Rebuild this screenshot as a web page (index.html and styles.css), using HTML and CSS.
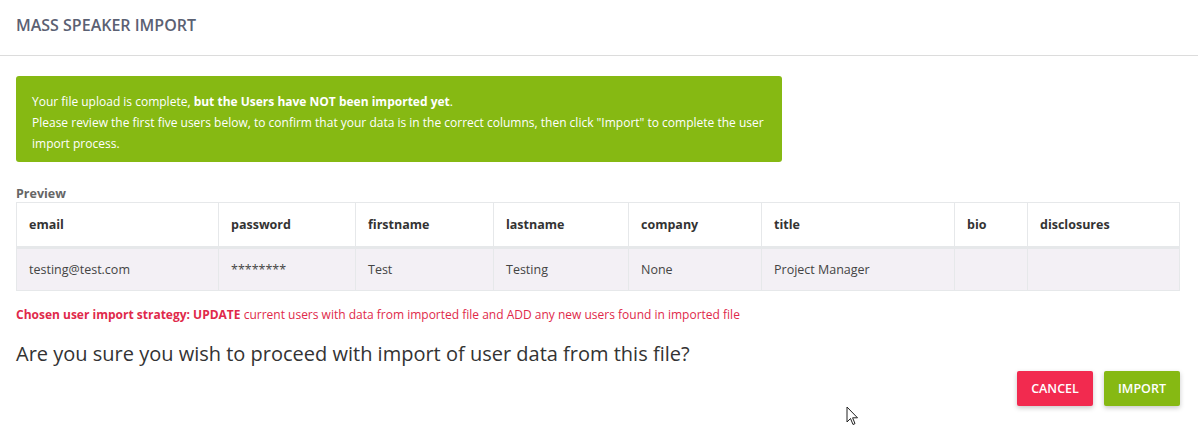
FILE: index.html
```html
<!DOCTYPE html>
<html>
<head>
<meta charset="utf-8">
<link rel="stylesheet" href="styles.css">
</head>
<body>
<div class="modal">
  <div class="modal-header">
    <h1 class="modal-title">MASS SPEAKER IMPORT</h1>
  </div>
  <div class="modal-body">
    <div class="alert">
      Your file upload is complete, <b>but the Users have NOT been imported yet</b>.<br>
      Please review the first five users below, to confirm that your data is in the correct columns, then click "Import" to complete the user import process.
    </div>
    <div class="preview-label">Preview</div>
    <table class="preview">
      <colgroup>
        <col style="width:202px"><col style="width:137px"><col style="width:138px"><col style="width:135px"><col style="width:133px"><col style="width:193px"><col style="width:73px"><col>
      </colgroup>
      <thead>
        <tr><th>email</th><th>password</th><th>firstname</th><th>lastname</th><th>company</th><th>title</th><th>bio</th><th>disclosures</th></tr>
      </thead>
      <tbody>
        <tr><td>testing@test.com</td><td>********</td><td>Test</td><td>Testing</td><td>None</td><td>Project Manager</td><td></td><td></td></tr>
      </tbody>
    </table>
    <p class="strategy"><b>Chosen user import strategy: UPDATE</b> current users with data from imported file and ADD any new users found in imported file</p>
    <p class="question">Are you sure you wish to proceed with import of user data from this file?</p>
    <div class="actions">
      <button class="btn btn-cancel">CANCEL</button>
      <button class="btn btn-import">IMPORT</button>
    </div>
  </div>
  <svg class="cursor" width="14" height="22" viewBox="0 0 14 22"><path d="M1 1 L1 16 L4.5 12.5 L7 18.5 L9 17.6 L6.6 11.8 L11.5 11.8 Z" fill="#fff" stroke="#222" stroke-width="1" stroke-linejoin="miter"/></svg>
</div>
</body>
</html>
```
FILE: styles.css
```css
* { box-sizing: border-box; }
html, body { margin: 0; padding: 0; background: #fff; }
body {
  font-family: "Open Sans", "Liberation Sans", sans-serif;
  color: #333;
  width: 1198px;
  height: 438px;
  overflow: hidden;
}
.modal { position: relative; height: 438px; }
.modal-header {
  height: 56px;
  border-bottom: 1px solid #dcdcdc;
  padding: 14px 16px 0;
}
.modal-title {
  margin: 0;
  font-size: 16px;
  font-weight: 600;
  color: #5b6173;
  line-height: 22px;
  letter-spacing: 0;
}
.modal-body { padding: 20px 18px 0 16px; }
.alert {
  width: 766px;
  height: 86px;
  background: #86b913;
  border-radius: 3px;
  color: #fff;
  font-size: 12px;
  line-height: 21px;
  padding: 15px 16px 0 16px;
}
.alert b { font-weight: 700; }
.preview-label {
  margin-top: 23px;
  font-size: 12.5px;
  font-weight: 700;
  color: #666;
  line-height: 17px;
}
.preview {
  width: 1164px;
  border-collapse: collapse;
  table-layout: fixed;
  font-size: 12.5px;
}
.preview th, .preview td {
  border: 1px solid #e6e8ea;
  text-align: left;
  padding: 0 12px;
}
.preview th {
  height: 45px;
  font-weight: 700;
  color: #333;
  background: #fff;
  border-bottom: 3px solid #e6e8ea;
}
.preview td {
  height: 43px;
  background: #f3f0f5;
  color: #444;
}
.strategy {
  margin: 16px 0 0;
  font-size: 12px;
  color: #e0294a;
  line-height: 16px;
}
.strategy b { font-weight: 700; }
.question {
  margin: 17px 0 0;
  font-size: 20px;
  color: #333;
  line-height: 28px;
  font-weight: 400;
}
.actions {
  display: flex;
  justify-content: flex-end;
  gap: 11px;
  margin-top: 3px;
}
.btn {
  border: none;
  border-radius: 2px;
  color: #fff;
  font-family: "Open Sans", "Liberation Sans", sans-serif;
  font-size: 12.5px;
  font-weight: 600;
  height: 35px;
  width: 76px;
  padding: 0;
  box-shadow: 0 2px 5px rgba(0,0,0,0.22);
}
.btn-cancel { background: #f22a4f; }
.btn-import { background: #86b913; }
.cursor { position: absolute; left: 846px; top: 406px; }
```
